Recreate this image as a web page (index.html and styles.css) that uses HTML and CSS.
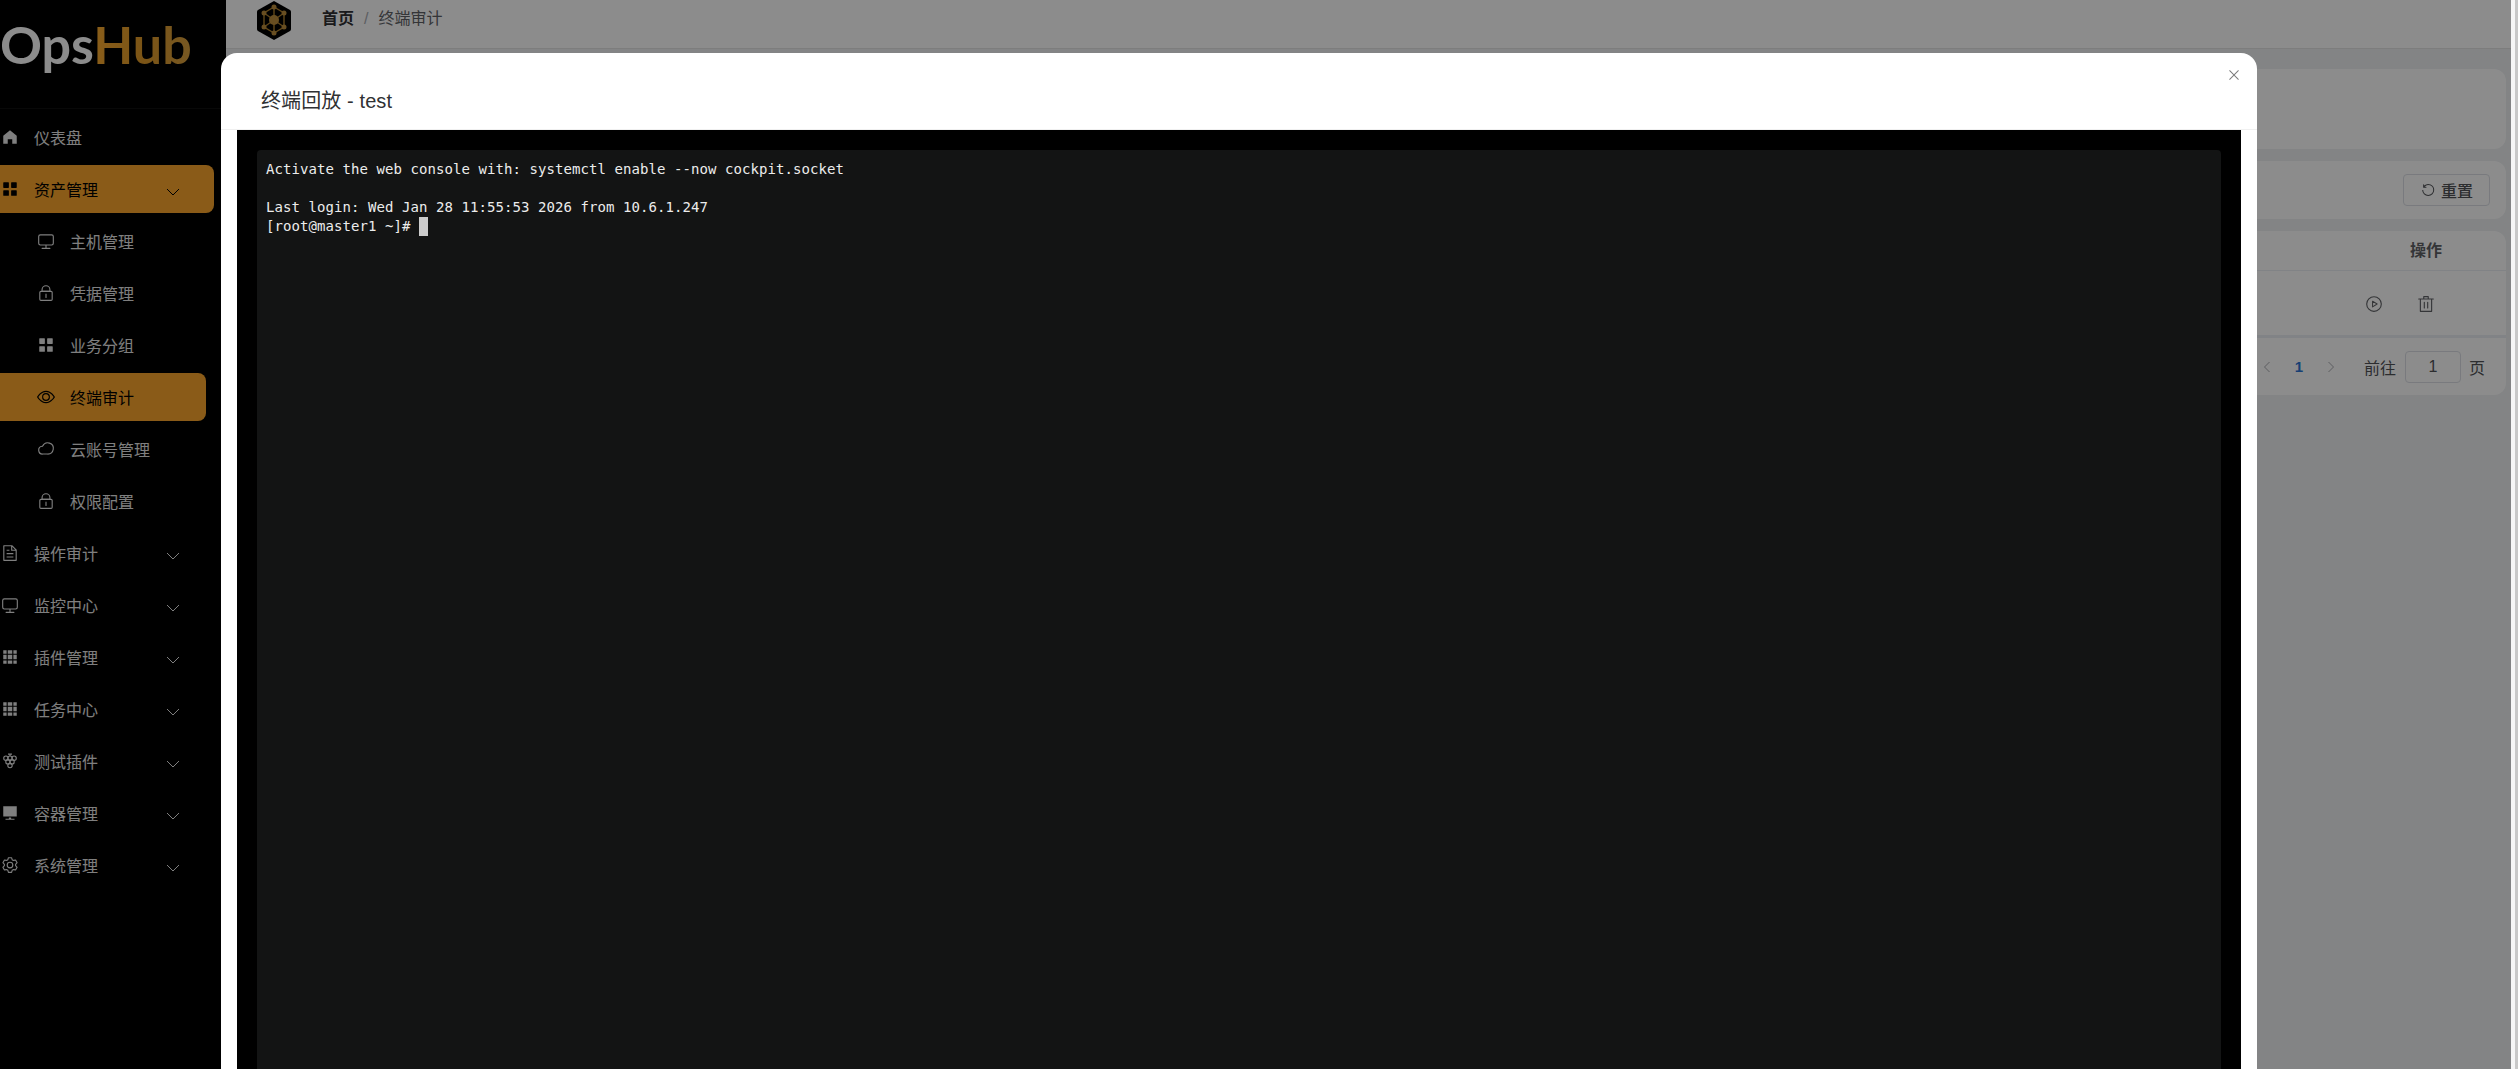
FILE: index.html
```html
<!DOCTYPE html>
<html lang="zh-CN">

<head>
    <meta charset="UTF-8">
    <title>OpsHub - 终端审计</title>
    <link rel="stylesheet" href="styles.css">
</head>

<body>
    <!-- icon sprite -->
    <svg class="sprite" xmlns="http://www.w3.org/2000/svg">
        <symbol id="i-home" viewBox="0 0 1024 1024"><path d="M512 128 128 447.936V896h255.936V640H640v256h255.936V447.936z"/></symbol>
        <symbol id="i-menu" viewBox="0 0 1024 1024"><path d="M160 448a32 32 0 0 1-32-32V160.064a32 32 0 0 1 32-32h256a32 32 0 0 1 32 32V416a32 32 0 0 1-32 32H160zm448 0a32 32 0 0 1-32-32V160.064a32 32 0 0 1 32-32h255.936a32 32 0 0 1 32 32V416a32 32 0 0 1-32 32H608zM160 896a32 32 0 0 1-32-32V608a32 32 0 0 1 32-32h256a32 32 0 0 1 32 32v256a32 32 0 0 1-32 32H160zm448 0a32 32 0 0 1-32-32V608a32 32 0 0 1 32-32h255.936a32 32 0 0 1 32 32v256a32 32 0 0 1-32 32H608z"/></symbol>
        <symbol id="i-monitor" viewBox="0 0 1024 1024"><path d="M544 768v128h192a32 32 0 1 1 0 64H288a32 32 0 1 1 0-64h192V768H192A128 128 0 0 1 64 640V256a128 128 0 0 1 128-128h640a128 128 0 0 1 128 128v384a128 128 0 0 1-128 128H544zM192 192a64 64 0 0 0-64 64v384a64 64 0 0 0 64 64h640a64 64 0 0 0 64-64V256a64 64 0 0 0-64-64H192z"/></symbol>
        <symbol id="i-lock" viewBox="0 0 1024 1024"><path d="M224 448a32 32 0 0 0-32 32v384a32 32 0 0 0 32 32h576a32 32 0 0 0 32-32V480a32 32 0 0 0-32-32H224zm0-64h576a96 96 0 0 1 96 96v384a96 96 0 0 1-96 96H224a96 96 0 0 1-96-96V480a96 96 0 0 1 96-96z"/><path d="M512 544a32 32 0 0 1 32 32v192a32 32 0 1 1-64 0V576a32 32 0 0 1 32-32zm192-160v-64a192 192 0 1 0-384 0v64h384zM512 64a256 256 0 0 1 256 256v128H256V320A256 256 0 0 1 512 64z"/></symbol>
        <symbol id="i-view" viewBox="0 0 1024 1024"><path d="M512 160c320 0 512 352 512 352S832 864 512 864 0 512 0 512s192-352 512-352zm0 64c-225.28 0-384.128 208.064-436.8 288 52.608 79.872 211.456 288 436.8 288 225.28 0 384.128-208.064 436.8-288-52.608-79.872-211.456-288-436.8-288zm0 64a224 224 0 1 1 0 448 224 224 0 0 1 0-448zm0 64a160.192 160.192 0 0 0-160 160c0 88.192 71.744 160 160 160s160-71.808 160-160-71.744-160-160-160z"/></symbol>
        <symbol id="i-cloud" viewBox="0 0 1024 1024"><path d="M598.4 831.872H328.192a256 256 0 0 1-34.496-510.528A352 352 0 1 1 598.4 831.872zm-271.36-64h272.256a288 288 0 1 0-248.512-417.664L335.04 381.44l-34.816 3.584a192 192 0 0 0 26.88 382.848z"/></symbol>
        <symbol id="i-doc" viewBox="0 0 1024 1024"><path d="M832 384H576V128H192v768h640V384zm-26.496-64L640 154.496V320h165.504zM160 64h480l256 256v608a32 32 0 0 1-32 32H160a32 32 0 0 1-32-32V96a32 32 0 0 1 32-32zm160 448h384v64H320v-64zm0-192h160v64H320v-64zm0 384h384v64H320v-64z"/></symbol>
        <symbol id="i-grid" viewBox="0 0 1024 1024"><path d="M640 384v256H384V384h256zm64 0h192v256H704V384zm-64 512H384V704h256v192zm64 0V704h192v192H704zm-64-768v192H384V128h256zm64 0h192v192H704V128zM320 384v256H128V384h192zm0 512H128V704h192v192zm0-768v192H128V128h192z"/></symbol>
        <symbol id="i-grape" viewBox="0 0 1024 1024">
            <g fill="none" stroke="currentColor" stroke-width="64">
                <circle cx="280" cy="350" r="125"/><circle cx="512" cy="350" r="125"/><circle cx="744" cy="350" r="125"/>
                <circle cx="396" cy="560" r="125"/><circle cx="628" cy="560" r="125"/><circle cx="512" cy="770" r="125"/>
                <path d="M512 225V90M400 120h224"/>
            </g>
        </symbol>
        <symbol id="i-platform" viewBox="0 0 1024 1024"><path d="M448 832v-64h128v64h192v64H256v-64h192zM128 704V128h768v576H128z"/></symbol>
        <symbol id="i-setting" viewBox="0 0 1024 1024"><path d="M600.704 64a32 32 0 0 1 30.464 22.208l35.2 109.376c14.784 7.232 28.928 15.36 42.432 24.512l112.384-24.192a32 32 0 0 1 34.432 15.36L944.32 364.8a32 32 0 0 1-4.032 37.504l-77.12 85.12a357.12 357.12 0 0 1 0 49.024l77.12 85.248a32 32 0 0 1 4.032 37.504l-88.704 153.6a32 32 0 0 1-34.432 15.296L708.8 803.904c-13.44 9.088-27.648 17.28-42.368 24.512l-35.264 109.376A32 32 0 0 1 600.704 960H423.296a32 32 0 0 1-30.464-22.208L357.696 828.48a351.616 351.616 0 0 1-42.56-24.64l-112.32 24.256a32 32 0 0 1-34.432-15.36L79.68 659.2a32 32 0 0 1 4.032-37.504l77.12-85.248a357.12 357.12 0 0 1 0-48.896l-77.12-85.248A32 32 0 0 1 79.68 364.8l88.704-153.6a32 32 0 0 1 34.432-15.296l112.32 24.256c13.568-9.152 27.776-17.408 42.56-24.64l35.2-109.312A32 32 0 0 1 423.232 64H600.64zm-23.424 64H446.72l-36.352 113.088-24.512 11.968a294.113 294.113 0 0 0-34.816 20.096l-22.656 15.36-116.224-25.088-65.28 113.152 79.68 88.192-1.92 27.136a293.12 293.12 0 0 0 0 40.192l1.92 27.136-79.808 88.192 65.344 113.152 116.224-25.024 22.656 15.296a294.113 294.113 0 0 0 34.816 20.096l24.512 11.968L446.72 896h130.688l36.48-113.152 24.448-11.904a288.282 288.282 0 0 0 34.752-20.096l22.592-15.296 116.288 25.024 65.28-113.152-79.744-88.192 1.92-27.136a293.12 293.12 0 0 0 0-40.256l-1.92-27.136 79.808-88.128-65.344-113.152-116.288 24.96-22.592-15.232a287.616 287.616 0 0 0-34.752-20.096l-24.448-11.904L577.344 128zM512 320a192 192 0 1 1 0 384 192 192 0 0 1 0-384zm0 64a128 128 0 1 0 0 256 128 128 0 0 0 0-256z"/></symbol>
        <symbol id="i-chevron" viewBox="0 0 14 8"><path d="M1 1l6 6 6-6" fill="none" stroke="currentColor" stroke-width="1"/></symbol>
        <symbol id="i-play" viewBox="0 0 1024 1024"><path d="M512 896a384 384 0 1 0 0-768 384 384 0 0 0 0 768zm0 64a448 448 0 1 1 0-896 448 448 0 0 1 0 896z"/><path d="M430 350 690 512 430 674z" fill="none" stroke="currentColor" stroke-width="60" stroke-linejoin="round"/></symbol>
        <symbol id="i-delete" viewBox="0 0 1024 1024"><path d="M160 256H96a32 32 0 0 1 0-64h256V95.936a32 32 0 0 1 32-32h256a32 32 0 0 1 32 32V192h256a32 32 0 1 1 0 64h-64v672a32 32 0 0 1-32 32H192a32 32 0 0 1-32-32V256zm448-64v-64H416v64h192zM224 896h576V256H224v640zm192-128a32 32 0 0 1-32-32V416a32 32 0 0 1 64 0v320a32 32 0 0 1-32 32zm192 0a32 32 0 0 1-32-32V416a32 32 0 0 1 64 0v320a32 32 0 0 1-32 32z"/></symbol>
        <symbol id="i-refresh" viewBox="0 0 1024 1024"><path d="M289.088 296.704h92.992a32 32 0 0 1 0 64H232.96a32 32 0 0 1-32-32V179.712a32 32 0 0 1 64 0v50.56a384 384 0 0 1 643.84 282.88 384 384 0 0 1-383.936 384 384 384 0 0 1-384-384h64a320 320 0 1 0 640 0 320 320 0 0 0-555.712-216.448z"/></symbol>
        <symbol id="i-close" viewBox="0 0 1024 1024"><path d="M764.288 214.592 512 466.88 259.712 214.592a31.936 31.936 0 0 0-45.12 45.12L466.752 512 214.528 764.224a31.936 31.936 0 1 0 45.12 45.184L512 557.184l252.288 252.288a31.936 31.936 0 0 0 45.12-45.12L557.12 512.064l252.288-252.352a31.936 31.936 0 1 0-45.12-45.184z"/></symbol>
    </svg>

    <div class="window">
        <div class="viewport">
            <div class="app">
                <aside class="sidebar">
                    <div class="brand"><span class="brand-ops">Ops</span><span class="brand-hub">Hub</span></div>
                    <ul class="menu">
                        <li class="menu-item"><svg class="icon"><use href="#i-home"/></svg>仪表盘</li>
                        <li class="menu-item is-open"><svg class="icon"><use href="#i-menu"/></svg>资产管理<svg class="chevron"><use href="#i-chevron"/></svg></li>
                        <li class="menu-item sub"><svg class="icon"><use href="#i-monitor"/></svg>主机管理</li>
                        <li class="menu-item sub"><svg class="icon"><use href="#i-lock"/></svg>凭据管理</li>
                        <li class="menu-item sub"><svg class="icon"><use href="#i-menu"/></svg>业务分组</li>
                        <li class="menu-item sub is-active"><svg class="icon"><use href="#i-view"/></svg>终端审计</li>
                        <li class="menu-item sub"><svg class="icon"><use href="#i-cloud"/></svg>云账号管理</li>
                        <li class="menu-item sub"><svg class="icon"><use href="#i-lock"/></svg>权限配置</li>
                        <li class="menu-item"><svg class="icon"><use href="#i-doc"/></svg>操作审计<svg class="chevron"><use href="#i-chevron"/></svg></li>
                        <li class="menu-item"><svg class="icon"><use href="#i-monitor"/></svg>监控中心<svg class="chevron"><use href="#i-chevron"/></svg></li>
                        <li class="menu-item"><svg class="icon"><use href="#i-grid"/></svg>插件管理<svg class="chevron"><use href="#i-chevron"/></svg></li>
                        <li class="menu-item"><svg class="icon"><use href="#i-grid"/></svg>任务中心<svg class="chevron"><use href="#i-chevron"/></svg></li>
                        <li class="menu-item"><svg class="icon"><use href="#i-grape"/></svg>测试插件<svg class="chevron"><use href="#i-chevron"/></svg></li>
                        <li class="menu-item"><svg class="icon"><use href="#i-platform"/></svg>容器管理<svg class="chevron"><use href="#i-chevron"/></svg></li>
                        <li class="menu-item"><svg class="icon"><use href="#i-setting"/></svg>系统管理<svg class="chevron"><use href="#i-chevron"/></svg></li>
                    </ul>
                </aside>

                <div class="main">
                    <div class="topbar">
                        <svg class="top-logo" viewBox="0 0 36 41">
                            <path d="M18 1 L34 10 Q35 10.6 35 12 V29 Q35 30.4 34 31 L18 40 L2 31 Q1 30.4 1 29 V12 Q1 10.6 2 10 Z" fill="#000"/>
                            <g stroke="#b0822e" stroke-width="1.4" fill="none">
                                <path d="M18 7 L28 13 V27 L18 33 L8 27 V13 Z"/>
                                <path d="M18 7 V33 M8 13 L28 27 M28 13 L8 27"/>
                            </g>
                            <g fill="#bd8f3c">
                                <circle cx="18" cy="7" r="2.5"/><circle cx="28" cy="13" r="2.5"/><circle cx="28" cy="27" r="2.5"/>
                                <circle cx="18" cy="33" r="2.5"/><circle cx="8" cy="27" r="2.5"/><circle cx="8" cy="13" r="2.5"/>
                                <circle cx="18" cy="20" r="5"/>
                            </g>
                        </svg>
                        <div class="breadcrumb">
                            <b>首页</b><span class="crumb-sep">/</span><span class="crumb-now">终端审计</span>
                        </div>
                    </div>
                    <div class="content">
                        <div class="panel panel-stats"></div>
                        <div class="panel panel-filter">
                            <button class="btn-reset"><svg class="btn-icon"><use href="#i-refresh"/></svg>重置</button>
                        </div>
                        <div class="panel">
                            <div class="table-head"><span class="col-action">操作</span></div>
                            <div class="table-row">
                                <svg class="row-icon"><use href="#i-play"/></svg>
                                <svg class="row-icon"><use href="#i-delete"/></svg>
                            </div>
                            <div class="pager">
                                <svg class="pager-arrow" viewBox="0 0 8 12"><path d="M6.5 1 1.5 6l5 5" fill="none" stroke="currentColor"/></svg>
                                <span class="pager-num">1</span>
                                <svg class="pager-arrow" viewBox="0 0 8 12"><path d="M1.5 1l5 5-5 5" fill="none" stroke="currentColor"/></svg>
                                <span class="pager-goto">前往</span>
                                <span class="pager-input">1</span>
                                <span>页</span>
                            </div>
                        </div>
                    </div>
                </div>
            </div>

            <div class="overlay">
                <div class="dialog">
                    <div class="dialog-header">
                        <span class="dialog-title">终端回放 - test</span>
                        <svg class="dialog-close"><use href="#i-close"/></svg>
                    </div>
                    <div class="dialog-body">
                        <pre class="terminal">Activate the web console with: systemctl enable --now cockpit.socket

Last login: Wed Jan 28 11:55:53 2026 from 10.6.1.247
[root@master1 ~]# <span class="cursor"></span></pre>
                    </div>
                </div>
            </div>
        </div>
        <div class="scrollbar"></div>
    </div>
</body>

</html>
```

FILE: styles.css
```css
* {
    box-sizing: border-box;
}

html,
body {
    height: 100%;
}

body {
    margin: 0;
    overflow: hidden;
    font-family: "Liberation Sans", "Noto Sans CJK SC", sans-serif;
    font-size: 16px;
    background-color: #fff;
}

.sprite {
    display: none;
}

svg {
    fill: currentColor;
}

.window {
    display: flex;
    height: 100%;
}

.viewport {
    position: relative;
    flex: 1;
    overflow: hidden;
}

.scrollbar {
    width: 7px;
    background-color: #c8c8c8;
    border-left: 4px solid #f6f6f6;
}

.app {
    display: flex;
    height: 100%;
}

/* sidebar */
.sidebar {
    width: 226px;
    flex-shrink: 0;
    background-color: #000;
    color: #e8e8e8;
}

.brand {
    height: 109px;
    padding-top: 13px;
    font-family: "Lato", sans-serif;
    font-size: 52px;
    font-weight: 700;
    line-height: 62px;
    border-bottom: 1px solid rgba(255, 255, 255, 0.06);
}

.brand-ops {
    color: #fff;
}

.brand-hub {
    background: linear-gradient(90deg, #fbab30, #e09a28 50%, #d8a040);
    background-clip: text;
    -webkit-background-clip: text;
    color: transparent;
}

.menu {
    display: flex;
    flex-direction: column;
    gap: 4px;
    list-style-type: none;
    margin: 0;
    padding: 4px 0 0;
}

.menu-item {
    display: flex;
    align-items: center;
    height: 48px;
    margin-right: 12px;
    padding-left: 1px;
    border-radius: 0 8px 8px 0;
}

.menu-item .icon {
    width: 18px;
    height: 18px;
    margin-right: 15px;
    flex-shrink: 0;
}

.menu-item.sub {
    margin-right: 20px;
    padding-left: 37px;
}

.menu-item.is-open,
.menu-item.is-active {
    background-color: #fba72d;
    color: #000;
}

.chevron {
    width: 14px;
    height: 8px;
    margin-left: auto;
    margin-right: 34px;
    margin-top: 6px;
}

/* top bar */
.topbar {
    display: flex;
    align-items: flex-start;
    gap: 30px;
    height: 49px;
    padding-left: 30px;
    background-color: #fff;
    border-bottom: 1px solid #e4e4e4;
}

.top-logo {
    width: 36px;
    height: 41px;
}

.breadcrumb {
    display: flex;
    align-items: center;
    height: 24px;
    margin-top: 7px;
    line-height: 24px;
}

.breadcrumb b {
    color: #303133;
}

.crumb-sep {
    margin: 0 10px;
    color: #a8abb2;
}

.crumb-now {
    color: #606266;
}

.main {
    flex: 1;
    min-width: 0;
    background-color: #eef0f2;
}

.content {
    display: flex;
    flex-direction: column;
    gap: 12px;
    padding: 20px 5px 0 15px;
}

.panel {
    background-color: #fff;
    border-radius: 12px;
}

.panel-stats {
    height: 80px;
}

.panel-filter {
    display: flex;
    justify-content: flex-end;
    align-items: center;
    height: 58px;
    padding-right: 16px;
}

.btn-reset {
    display: flex;
    align-items: center;
    justify-content: center;
    width: 87px;
    height: 32px;
    padding: 0;
    font-family: inherit;
    font-size: 16px;
    font-weight: 500;
    color: #505256;
    background-color: #fff;
    border: 1px solid #dcdfe6;
    border-radius: 4px;
}

.btn-icon {
    width: 16px;
    height: 16px;
    margin-right: 5px;
}

.table-head {
    display: flex;
    justify-content: flex-end;
    align-items: center;
    height: 40px;
    padding-bottom: 3px;
    border-bottom: 1px solid #ebeef5;
}

.col-action {
    width: 160px;
    text-align: center;
    font-weight: 700;
    color: #606266;
}

.table-row {
    display: flex;
    justify-content: flex-end;
    align-items: center;
    gap: 34px;
    height: 67px;
    padding: 2px 71px 0 0;
    border-bottom: 3px solid #ebeef5;
    color: #606266;
}

.row-icon {
    width: 18px;
    height: 18px;
}

.pager {
    display: flex;
    justify-content: flex-end;
    align-items: center;
    height: 57px;
    padding-right: 21px;
    color: #505256;
}

.pager-arrow {
    width: 8px;
    height: 12px;
    color: #a8abb2;
}

.pager-num {
    margin: 0 24px;
    font-weight: 700;
    font-size: 15px;
    color: #2a74d4;
}

.pager-goto {
    margin-left: 29px;
}

.pager-input {
    width: 56px;
    height: 32px;
    margin: 0 8px 0 9px;
    line-height: 30px;
    text-align: center;
    border: 1px solid #dcdfe6;
    border-radius: 4px;
}

/* dialog */
.overlay {
    position: absolute;
    top: 0;
    left: 0;
    width: 100%;
    height: 100%;
    padding: 53px 0 0 221px;
    background-color: rgba(0, 0, 0, 0.45);
}

.dialog {
    width: 2036px;
    background-color: #fff;
    border-radius: 16px;
}

.dialog-header {
    display: flex;
    justify-content: space-between;
    height: 77px;
    padding: 33px 15px 0 40px;
    border-bottom: 1px solid #f0f0f0;
}

.dialog-title {
    font-size: 20px;
    letter-spacing: 0.1px;
    line-height: 30px;
    color: #303133;
}

.dialog-close {
    width: 16px;
    height: 16px;
    margin-top: -19px;
    color: #7a7a7a;
}

.dialog-body {
    margin: 0 16px;
    padding: 20px;
    background-color: #000;
}

.terminal {
    height: 1000px;
    margin: 0;
    padding: 10px 9px;
    font-family: "DejaVu Sans Mono", monospace;
    font-size: 14px;
    letter-spacing: 0.07px;
    line-height: 19px;
    color: #ececec;
    background-color: #131414;
    border-radius: 4px;
}

.cursor {
    display: inline-block;
    width: 9px;
    height: 19px;
    vertical-align: top;
    background-color: #ccc;
}
```
